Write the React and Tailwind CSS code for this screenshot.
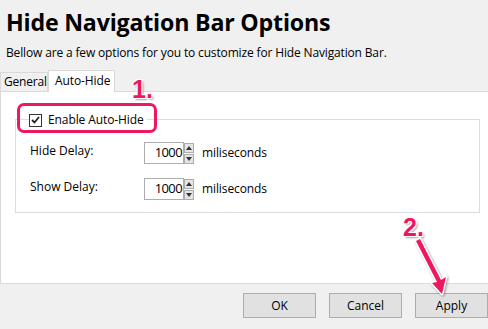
import React from 'react';

const ui = { fontFamily: '"Open Sans", "Noto Sans", sans-serif' };

function Spin({ value }) {
  return (
    <div className="flex items-center">
      <div className="w-[40px] h-[22px] border border-[#adadad] bg-white flex items-center justify-end pr-[1px] text-[13px] tracking-[-0.6px]">
        {value}
      </div>
      <div className="flex flex-col w-[10px] h-[21px] gap-[1px]">
        <div className="flex-1 bg-[#e5e5e5] border border-[#acacac] flex items-center justify-center">
          <svg width="6" height="4" viewBox="0 0 6 4"><path d="M0 4 L3 0 L6 4 Z" fill="#333" /></svg>
        </div>
        <div className="flex-1 bg-[#e5e5e5] border border-[#acacac] flex items-center justify-center">
          <svg width="6" height="4" viewBox="0 0 6 4"><path d="M0 0 L3 4 L6 0 Z" fill="#333" /></svg>
        </div>
      </div>
      <span className="ml-[8px] text-[12px] tracking-[-0.1px]">miliseconds</span>
    </div>
  );
}

function Btn({ children }) {
  return (
    <button className="w-[73px] h-[25px] border border-[#adadad] bg-[#e1e1e1] text-[12px] text-black flex items-center justify-center">
      {children}
    </button>
  );
}

const pinkText = {
  color: '#ee1860',
  textShadow: '1px 1px 0 #fff, -1px -1px 0 #fff, 1px -1px 0 #fff, -1px 1px 0 #fff, 2px 2px 2px rgba(0,0,0,0.35)',
  fontFamily: '"Liberation Sans", Arial, sans-serif',
};

export default function App() {
  return (
    <div className="relative w-[488px] h-[329px] bg-[#f0f0f0] overflow-hidden text-black" style={ui}>
      <div className="px-[6px] pt-[6px]">
        <h1 className="text-[23.2px] font-bold leading-[32px] tracking-[-0.2px]">Hide Navigation Bar Options</h1>
        <p className="text-[12px] leading-[18px] mt-[6px] tracking-[-0.15px]">
          Bellow are a few options for you to customize for Hide Navigation Bar.
        </p>
      </div>

      {/* tabs */}
      <div className="flex items-end mt-[7px] h-[22px]">
        <div className="h-[19px] w-[48px] border border-b-0 border-[#d9d9d9] bg-[#f0f0f0] text-[12px] leading-[18px] pl-[3px] tracking-[-0.2px]">
          General
        </div>
        <div className="relative z-10 h-[22px] w-[67px] border border-b-0 border-[#d9d9d9] bg-white text-[12px] leading-[20px] pl-[6px] -mb-[1px] tracking-[-0.1px]">
          Auto-Hide
        </div>
      </div>

      {/* panel */}
      <div className="h-[192px] bg-white border-t border-l border-[#d9d9d9] pt-[27px] pl-[14px] pr-[8px]">
        <div className="relative border border-[#dcdcdc] h-[94px]">
          <div className="absolute left-[13px] -top-[7px] bg-white flex items-center pr-[3px]">
            <div className="w-[13px] h-[13px] border border-[#333] bg-white flex items-center justify-center">
              <svg width="9" height="8" viewBox="0 0 9 8">
                <path d="M1 4 L3.5 6.5 L8 1" stroke="#222" strokeWidth="1.8" fill="none" />
              </svg>
            </div>
            <span className="ml-[6px] text-[12px] leading-[14px] tracking-[-0.1px]">Enable Auto-Hide</span>
          </div>
          <div className="flex flex-col gap-[14px] pt-[22px] pl-[14px]">
            <div className="flex items-center">
              <span className="w-[114px] text-[12px] -mt-[4px]">Hide Delay:</span>
              <Spin value="1000" />
            </div>
            <div className="flex items-center">
              <span className="w-[114px] text-[12px] -mt-[4px]">Show Delay:</span>
              <Spin value="1000" />
            </div>
          </div>
        </div>
      </div>

      {/* bottom bar */}
      <div className="border-t border-[#dcdcdc] flex justify-end gap-[13px] pt-[9px]">
        <Btn>OK</Btn>
        <Btn>Cancel</Btn>
        <Btn>Apply</Btn>
      </div>

      {/* annotations */}
      <div className="absolute left-[17px] top-[103px] w-[140px] h-[30px] border-[3px] border-[#ee1860] rounded-[7px] pointer-events-none" />
      <div className="absolute left-[132px] top-[76px] text-[25px] font-bold leading-[26px]" style={pinkText}>1.</div>
      <div className="absolute left-[403px] top-[214px] text-[25px] font-bold leading-[26px]" style={pinkText}>2.</div>
      <svg className="absolute left-0 top-0 pointer-events-none" width="488" height="329">
        <g style={{ filter: 'drop-shadow(1px 1px 1px rgba(0,0,0,0.35))' }}>
          <path d="M416 241 L420 239 L441 280 L446 277 L442 294 L432 283 L437 282 Z" fill="#fff" stroke="#fff" strokeWidth="3" strokeLinejoin="round" />
          <path d="M416 241 L420 239 L441 280 L446 277 L442 294 L432 283 L437 282 Z" fill="#ee1860" />
        </g>
      </svg>
    </div>
  );
}
